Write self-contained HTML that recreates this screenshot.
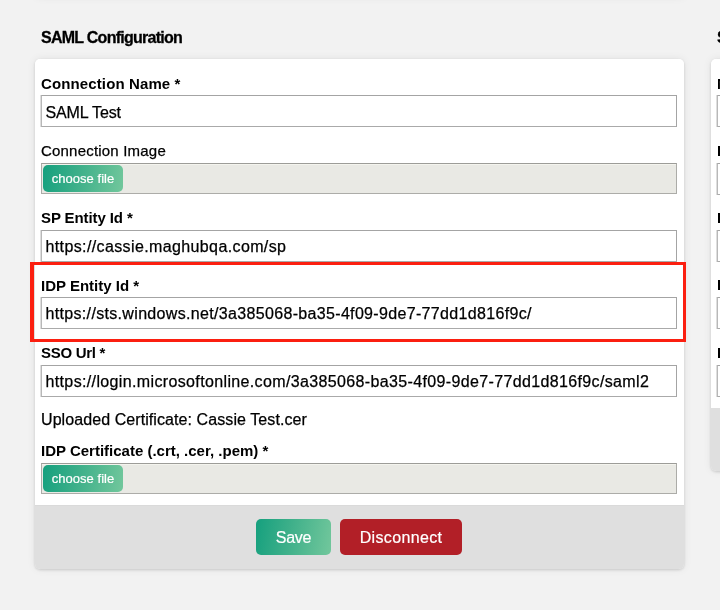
<!DOCTYPE html>
<html><head><meta charset="utf-8">
<style>
*{box-sizing:border-box;margin:0;padding:0}
html,body{width:720px;height:610px;overflow:hidden;background:#f2f2f2;font-family:"Liberation Sans",sans-serif;color:#000}
.abs{position:absolute}
.sh{box-shadow:0 0 8px rgba(0,0,0,.08),0 1px 3px rgba(0,0,0,.14)}
.topcard{position:absolute;left:35px;top:-32px;width:650px;height:29px;background:#fff;border-radius:5px}
.h{position:absolute;font-weight:bold;font-size:16px;line-height:16px;white-space:nowrap;letter-spacing:-0.74px;color:#000;-webkit-text-stroke:0.3px #000}
.card{position:absolute;left:35px;top:59px;width:649px;height:510px;background:linear-gradient(#fff 0,#fff 446px,#dadada 446px,#dadada 447px,#dfdfdf 447px);border-radius:5px}
.card2{position:absolute;left:711px;top:59px;width:300px;height:412px;background:linear-gradient(#fff 0,#fff 349px,#dfdfdf 349px);border-radius:5px}
.footer{position:absolute;left:0;right:0;bottom:0;height:64px;background:#dfdfdf}
.lbl{position:absolute;left:41px;font-size:15px;font-weight:bold;white-space:nowrap;line-height:15px}
.txt{position:absolute;left:41px;font-size:16px;white-space:nowrap;line-height:16px;-webkit-text-stroke:0.25px #000}
.inp{position:absolute;left:41px;width:636px;height:32px;background:#fff;border:1px solid #a4a4a4;border-left-color:#b8b8b8;border-bottom-color:#aaa;box-shadow:-1px 0 0 #dedede}
.inp span{position:absolute;left:3.5px;top:8px;font-size:16px;line-height:16px;white-space:nowrap;-webkit-text-stroke:0.25px #000;letter-spacing:0.35px}
.file{position:absolute;left:41px;width:636px;height:31px;background:#e9e9e4;border:1px solid #acaca8;border-top-color:#9c9c98;box-shadow:inset 0 1px 0 #f4f4ee}
.grad{background:linear-gradient(100deg,#15a07e 0%,#3fb08a 45%,#72c79c 100%)}
.cf{position:absolute;left:1px;top:1px;width:80px;height:27px;border-radius:5px;color:#fff;font-size:13px;line-height:27px;text-align:center;letter-spacing:0.05px;-webkit-text-stroke:0.2px #fff}
.btn{position:absolute;top:519px;height:36px;border-radius:5px;color:#fff;font-size:16px;line-height:38px;text-align:center;-webkit-text-stroke:0.2px #fff}
.red{position:absolute;left:30px;top:262px;width:656px;height:80px;border:3px solid #fb1f10;border-left-width:4px}
</style></head><body>
<div id="w" style="position:absolute;left:0;top:0;width:720px;height:610px;will-change:transform">
<div class="topcard sh"></div>
<div class="h" style="left:41px;top:30px">SAML Configuration</div>
<div class="h" style="left:717px;top:30px">S</div>
<div class="card sh"></div>
<div class="card2 sh"></div>

<div class="lbl" style="top:76px;letter-spacing:0.12px">Connection Name *</div>
<div class="inp" style="top:95px"><span style="top:9px;letter-spacing:-0.12px">SAML Test</span></div>

<div class="txt" style="top:143px;font-size:15px;line-height:15px;letter-spacing:0.2px">Connection Image</div>
<div class="file" style="top:163px"><div class="cf grad">choose file</div></div>

<div class="lbl" style="top:210px;letter-spacing:-0.1px">SP Entity Id *</div>
<div class="inp" style="top:230px"><span style="letter-spacing:0.38px">https://cassie.maghubqa.com/sp</span></div>

<div class="lbl" style="top:277.5px">IDP Entity Id *</div>
<div class="inp" style="top:297px"><span style="letter-spacing:0.33px">https://sts.windows.net/3a385068-ba35-4f09-9de7-77dd1d816f9c/</span></div>

<div class="lbl" style="top:345px;letter-spacing:-0.3px">SSO Url *</div>
<div class="inp" style="top:365px"><span style="letter-spacing:0.36px">https://login.microsoftonline.com/3a385068-ba35-4f09-9de7-77dd1d816f9c/saml2</span></div>

<div class="txt" style="top:411.5px;letter-spacing:0.08px">Uploaded Certificate: Cassie Test.cer</div>

<div class="lbl" style="top:443px">IDP Certificate (.crt, .cer, .pem) *</div>
<div class="file" style="top:463px"><div class="cf grad">choose file</div></div>

<div class="red"></div>

<div class="btn grad" style="left:256px;width:75px;letter-spacing:-0.3px">Save</div>
<div class="btn" style="left:340px;width:122px;background:#b21f27;letter-spacing:0.35px">Disconnect</div>

<!-- right card fragments -->
<div class="lbl" style="left:717px;top:75.5px">N</div>
<div class="inp" style="left:717px;top:95px"></div>
<div class="lbl" style="left:717px;top:142.5px">E</div>
<div class="inp" style="left:717px;top:163px"></div>
<div class="lbl" style="left:717px;top:210px">E</div>
<div class="inp" style="left:717px;top:230px"></div>
<div class="lbl" style="left:717px;top:277px">E</div>
<div class="inp" style="left:717px;top:297px"></div>
<div class="lbl" style="left:717px;top:344.5px">P</div>
<div class="inp" style="left:717px;top:365px"></div>
</div>
</body></html>
